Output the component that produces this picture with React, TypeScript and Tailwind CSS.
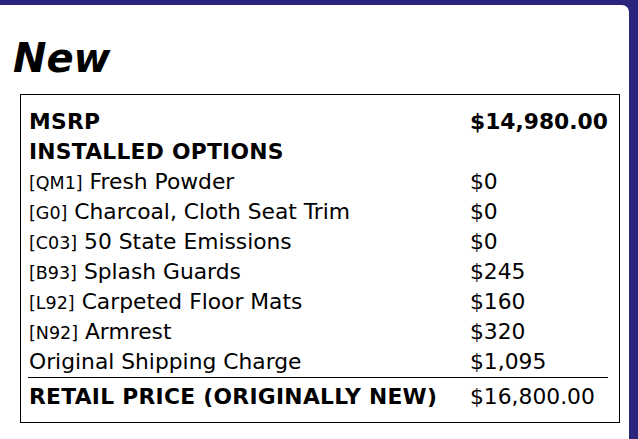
import React from "react";

type Row = { code?: string; label: string; value: string; bold?: boolean };

const rows: Row[] = [
  { label: "MSRP", value: "$14,980.00", bold: true },
  { label: "INSTALLED OPTIONS", value: "", bold: true },
  { code: "[QM1]", label: "Fresh Powder", value: "$0" },
  { code: "[G0]", label: "Charcoal, Cloth Seat Trim", value: "$0" },
  { code: "[C03]", label: "50 State Emissions", value: "$0" },
  { code: "[B93]", label: "Splash Guards", value: "$245" },
  { code: "[L92]", label: "Carpeted Floor Mats", value: "$160" },
  { code: "[N92]", label: "Armrest", value: "$320" },
  { label: "Original Shipping Charge", value: "$1,095" },
];

export default function App() {
  return (
    <div className="h-[439px] w-[638px] overflow-hidden bg-[#2b247c] pt-[5px] pr-[9px]">
      <div className="h-[434px] bg-white rounded-tr-[7px] pt-[33px]">
        <h1 className="ml-[13px] text-[40px] leading-[40px] font-bold italic text-black font-['DejaVu_Sans',Verdana,sans-serif]">
          New
        </h1>
        <div className="mt-[16px] ml-[20px] h-[329px] w-[600px] border border-black pt-[12px] pl-[7px] pr-[11px] font-['DejaVu_Sans',Verdana,sans-serif] text-[21.8px] text-black">
          {rows.map((r, i) => (
            <div key={i} className={`flex h-[30px] leading-[30px] ${r.bold ? "font-bold" : ""}`}>
              <div className={`w-[440px] pl-[1px] whitespace-nowrap ${r.bold ? "tracking-[0.25px]" : ""}`}>
                {r.code && <span className="text-[17.5px]">{r.code}</span>}
                {r.code ? " " : ""}
                {r.label}
              </div>
              <div className="pl-[2px] whitespace-nowrap">{r.value}</div>
            </div>
          ))}
          <div className="flex h-[35px] border-t border-black pt-[4px] leading-[30px]">
            <div className="w-[440px] pl-[1px] font-bold tracking-[0.28px] whitespace-nowrap">RETAIL PRICE (ORIGINALLY NEW)</div>
            <div className="pl-[2px] whitespace-nowrap">$16,800.00</div>
          </div>
        </div>
      </div>
    </div>
  );
}
